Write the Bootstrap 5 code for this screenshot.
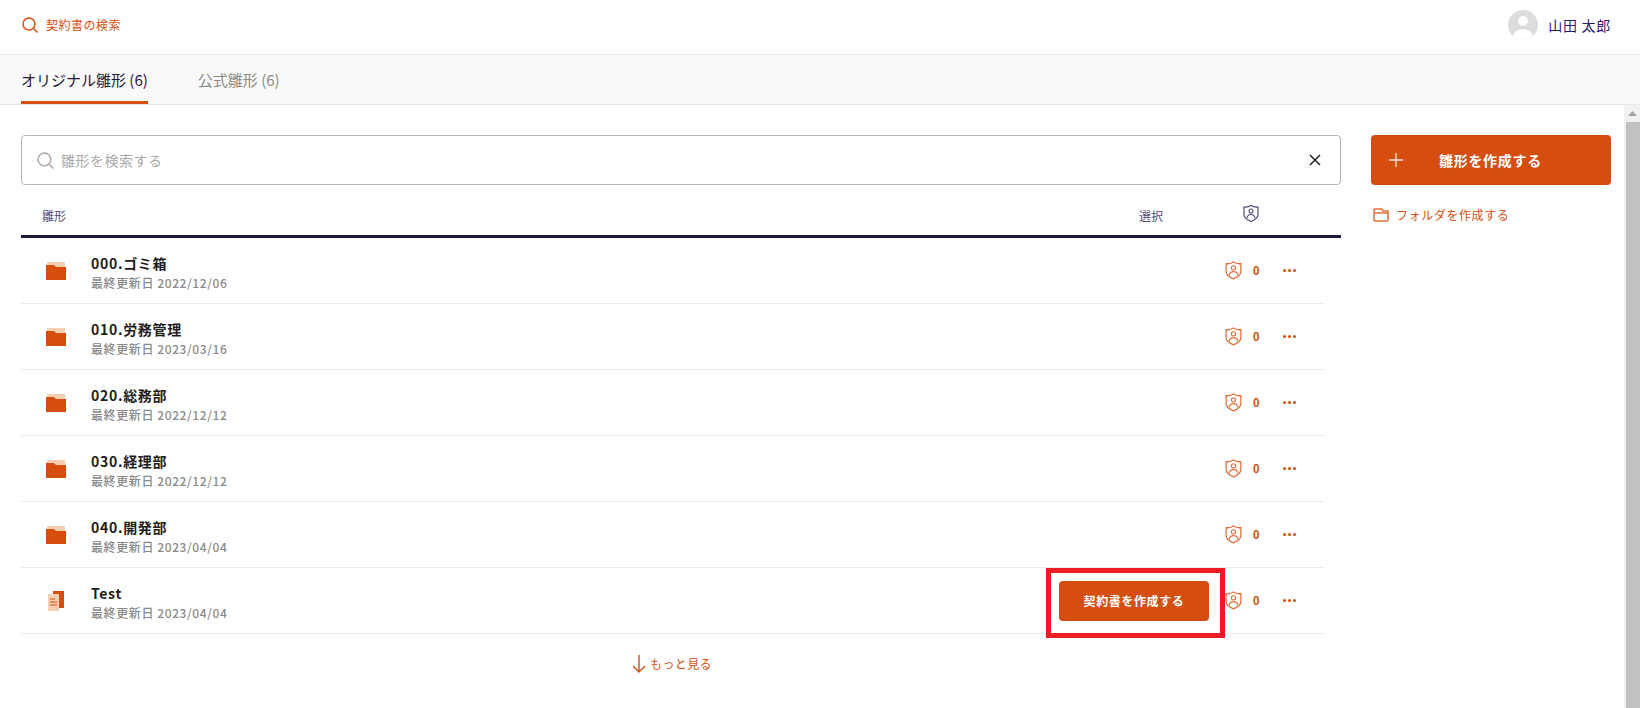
<!DOCTYPE html>
<html lang="ja">
<head>
  <meta charset="UTF-8">
  <title>雛形一覧</title>
  <link href="https://cdn.jsdelivr.net/npm/bootstrap@5.3.0/dist/css/bootstrap.min.css" rel="stylesheet">
  <style>
    html, body { height: 708px; overflow: hidden; }
    body { font-family: "Noto Sans CJK JP", "Noto Sans", sans-serif; background: #fff; color: #1f1a3a; }
    .top-bar { height: 55px; padding: 0 29px 4px 22px; border-bottom: 1px solid #e8e8e8; }
    .top-search { color: #d64e0f; font-size: 12px; letter-spacing: .04em; gap: 8px; }
    .user-name { font-size: 14px; letter-spacing: .05em; color: #2b1a66; margin-left: 10px; }
    .avatar { width: 30px; height: 30px; border-radius: 50%; background: #dcdcdc; overflow: hidden; }
    .tab-bar { height: 50px; background: #f9f9f9; border-bottom: 1px solid #e8e8e8; padding-left: 21px; gap: 50px; }
    .tab-item { height: 49px; font-size: 15px; line-height: 49px; color: #8a8a8a; }
    .tab-item.is-active { color: #1f1a3a; border-bottom: 3px solid #d64e0f; }
    .page-body { height: 603px; }
    .main-col { width: 1320px; margin-left: 21px; padding-top: 30px; }
    .side-col { width: 240px; margin-left: 30px; padding-top: 30px; }
    .search-box { height: 50px; border: 1px solid #b5b5b5; border-radius: 4px; padding: 0 19px 0 15px; gap: 7px; color: #a9a9a9; font-size: 14px; letter-spacing: .5px; }
    .list-head { height: 53px; border-bottom: 3px solid #1f1a3a; font-size: 12px; color: #544a78; padding: 12px 0 0 21px; }
    .head-select { margin-left: auto; margin-right: 80px; }
    .head-shield { margin-right: 82px; margin-bottom: 6px; }
    .doc-row { width: 1304px; height: 66px; border-bottom: 1px solid #ebebeb; }
    .row-icon { width: 70px; padding-left: 25px; }
    .icon-box { width: 20px; }
    .row-text { padding-top: 3px; }
    .row-name { font-size: 14px; font-weight: 700; color: #1d1d1d; letter-spacing: .05em; line-height: 20px; }
    .row-date { font-size: 12px; font-weight: 500; color: #8a8a8a; letter-spacing: .05em; line-height: 18px; margin-top: 1px; }
    .row-tools { margin-right: 29px; }
    .shield-mark { color: #e2703c; }
    .row-count { color: #d64e0f; font-size: 11px; font-weight: 700; width: 32px; padding-left: 11px; }
    .row-dots { gap: 2px; margin-left: 9px; }
    .row-dots i { width: 3px; height: 3px; border-radius: 50%; background: #d64e0f; display: block; }
    .create-doc { position: relative; width: 150px; height: 40px; margin-right: 16px; background: #d64e0f; border: 0; border-radius: 4px; color: #fff; font-size: 12px; font-weight: 700; letter-spacing: .05em; }
    .create-doc::after { content: ""; position: absolute; left: -13px; top: -13px; width: 179px; height: 70px; border: 5px solid #ed1c24; pointer-events: none; }
    .more-link { width: 1302px; height: 60px; color: #d64e0f; font-size: 12px; letter-spacing: .03em; gap: 4px; }
    .create-main { width: 240px; height: 50px; background: #d64e0f; border: 0; border-radius: 4px; color: #fff; font-size: 14px; font-weight: 700; letter-spacing: .05em; padding: 0 0 0 18px; }
    .create-main span { margin-left: 36px; }
    .folder-link { color: #d64e0f; font-size: 12px; letter-spacing: .05em; gap: 7px; margin-top: 21px; padding-left: 2px; }
    .scroll-rail { width: 16px; height: 603px; background: #f1f1f1; margin-left: auto; }
    .scroll-up { height: 17px; }
    .scroll-thumb { height: 586px; background: #c1c1c1; margin: 0 0 0 2px; width: 14px; }
  </style>
</head>
<body>
  <svg class="d-none">
    <symbol id="shield" viewBox="0 0 16 18">
      <path d="M1 2.5 Q5 3 8 1 Q11 3 15 2.5 V10 Q15 14 8 17 Q1 14 1 10 Z" fill="none" stroke="currentColor" stroke-width="1.2"/>
      <circle cx="8" cy="6.5" r="2" fill="none" stroke="currentColor" stroke-width="1.1"/>
      <path d="M4 13.5 Q4.5 10 8 10 Q11.5 10 12 13.5" fill="none" stroke="currentColor" stroke-width="1.1"/>
    </symbol>
    <symbol id="folder" viewBox="0 0 20 18">
      <rect x="1" y="0" width="18" height="8" fill="#f5cfb1"/>
      <path d="M0 3 H8 L10 5 H20 V18 H0 Z" fill="#d64e0f"/>
    </symbol>
    <symbol id="doc" viewBox="0 0 16 20">
      <rect x="5" y="0" width="11" height="17" fill="#d64e0f"/>
      <rect x="0" y="3" width="11" height="17" fill="#f5cfb1"/>
      <path d="M2 8 H7 M2 11 H9 M2 14 H9" stroke="#d64e0f" stroke-width="1"/>
    </symbol>
  </svg>

  <!-- ヘッダー -->
  <div class="top-bar d-flex align-items-center justify-content-between">
    <div class="top-search d-flex align-items-center">
      <svg width="16" height="16" viewBox="0 0 16 16" fill="none" stroke="#d64e0f" stroke-width="1.5"><circle cx="7" cy="7" r="6"/><path d="M11.5 11.5 L15.5 15.5"/></svg>
      <span>契約書の検索</span>
    </div>
    <div class="d-flex align-items-center">
      <div class="avatar">
        <svg width="30" height="30" viewBox="0 0 30 30"><circle cx="15" cy="11" r="5" fill="#fff"/><ellipse cx="15" cy="27" rx="10" ry="8" fill="#fff"/></svg>
      </div>
      <span class="user-name">山田 太郎</span>
    </div>
  </div>

  <!-- タブ -->
  <div class="tab-bar d-flex">
    <div class="tab-item is-active">オリジナル雛形 (6)</div>
    <div class="tab-item">公式雛形 (6)</div>
  </div>

  <div class="page-body d-flex">
    <div class="main-col">
      <div class="search-box d-flex align-items-center">
        <svg width="17" height="17" viewBox="0 0 16 16" fill="none" stroke="#aaa" stroke-width="1.4"><circle cx="7" cy="7" r="6"/><path d="M11.5 11.5 L15.5 15.5"/></svg>
        <span>雛形を検索する</span>
        <svg class="ms-auto" width="12" height="12" viewBox="0 0 12 12" stroke="#222" stroke-width="1.5"><path d="M1 1 L11 11 M11 1 L1 11"/></svg>
      </div>
      <div class="list-head d-flex align-items-center">
        <span>雛形</span>
        <span class="head-select">選択</span>
        <svg class="head-shield" width="16" height="19"><use href="#shield"/></svg>
      </div>
      <div id="rows"></div>
      <div class="more-link d-flex align-items-center justify-content-center">
        <svg width="14" height="18" viewBox="0 0 14 18" fill="none" stroke="#d64e0f" stroke-width="1.4"><path d="M7 0 V17 M1 11 L7 17 L13 11"/></svg>
        <span>もっと見る</span>
      </div>
    </div>
    <div class="side-col">
      <button class="create-main d-flex align-items-center">
        <svg width="14" height="14" viewBox="0 0 14 14" stroke="#f8e4d8" stroke-width="1.3"><path d="M7 0 V14 M0 7 H14"/></svg>
        <span>雛形を作成する</span>
      </button>
      <div class="folder-link d-flex align-items-center">
        <svg width="16" height="14" viewBox="0 0 16 14" fill="none" stroke="#e0703c" stroke-width="1.5"><path d="M1 12 Q1 13 2 13 H14 Q15 13 15 12 V3 H10 L9 1 H2 Q1 1 1 2 Z M1 5 H15"/></svg>
        <span>フォルダを作成する</span>
      </div>
    </div>
    <div class="scroll-rail">
      <div class="scroll-up d-flex justify-content-center align-items-center">
        <svg width="9" height="5" viewBox="0 0 9 5"><path d="M4.5 0 L9 5 H0 Z" fill="#a3a3a3"/></svg>
      </div>
      <div class="scroll-thumb"></div>
    </div>
  </div>

  <script>
    const docs = [
      { name: "000.ゴミ箱", date: "2022/12/06", icon: "folder" },
      { name: "010.労務管理", date: "2023/03/16", icon: "folder" },
      { name: "020.総務部", date: "2022/12/12", icon: "folder" },
      { name: "030.経理部", date: "2022/12/12", icon: "folder" },
      { name: "040.開発部", date: "2023/04/04", icon: "folder" },
      { name: "Test", date: "2023/04/04", icon: "doc" }
    ];
    const rows = document.getElementById("rows");
    docs.forEach(d => {
      const size = d.icon === "folder" ? 'width="20" height="18"' : 'width="16" height="20"';
      const btn = d.icon === "doc" ? '<button class="create-doc">契約書を作成する</button>' : "";
      const div = document.createElement("div");
      div.className = "doc-row d-flex align-items-center";
      div.innerHTML = `
        <div class="row-icon"><div class="icon-box d-flex justify-content-center"><svg class="d-block" ${size}><use href="#${d.icon}"/></svg></div></div>
        <div class="row-text">
          <div class="row-name">${d.name}</div>
          <div class="row-date">最終更新日 ${d.date}</div>
        </div>
        <div class="row-tools ms-auto d-flex align-items-center">${btn}
          <svg width="17" height="19" class="shield-mark"><use href="#shield"/></svg>
          <div class="row-count">0</div>
          <div class="row-dots d-flex"><i></i><i></i><i></i></div>
        </div>`;
      rows.appendChild(div);
    });
  </script>
  <script src="https://cdn.jsdelivr.net/npm/bootstrap@5.3.0/dist/js/bootstrap.bundle.min.js"></script>
</body>
</html>
